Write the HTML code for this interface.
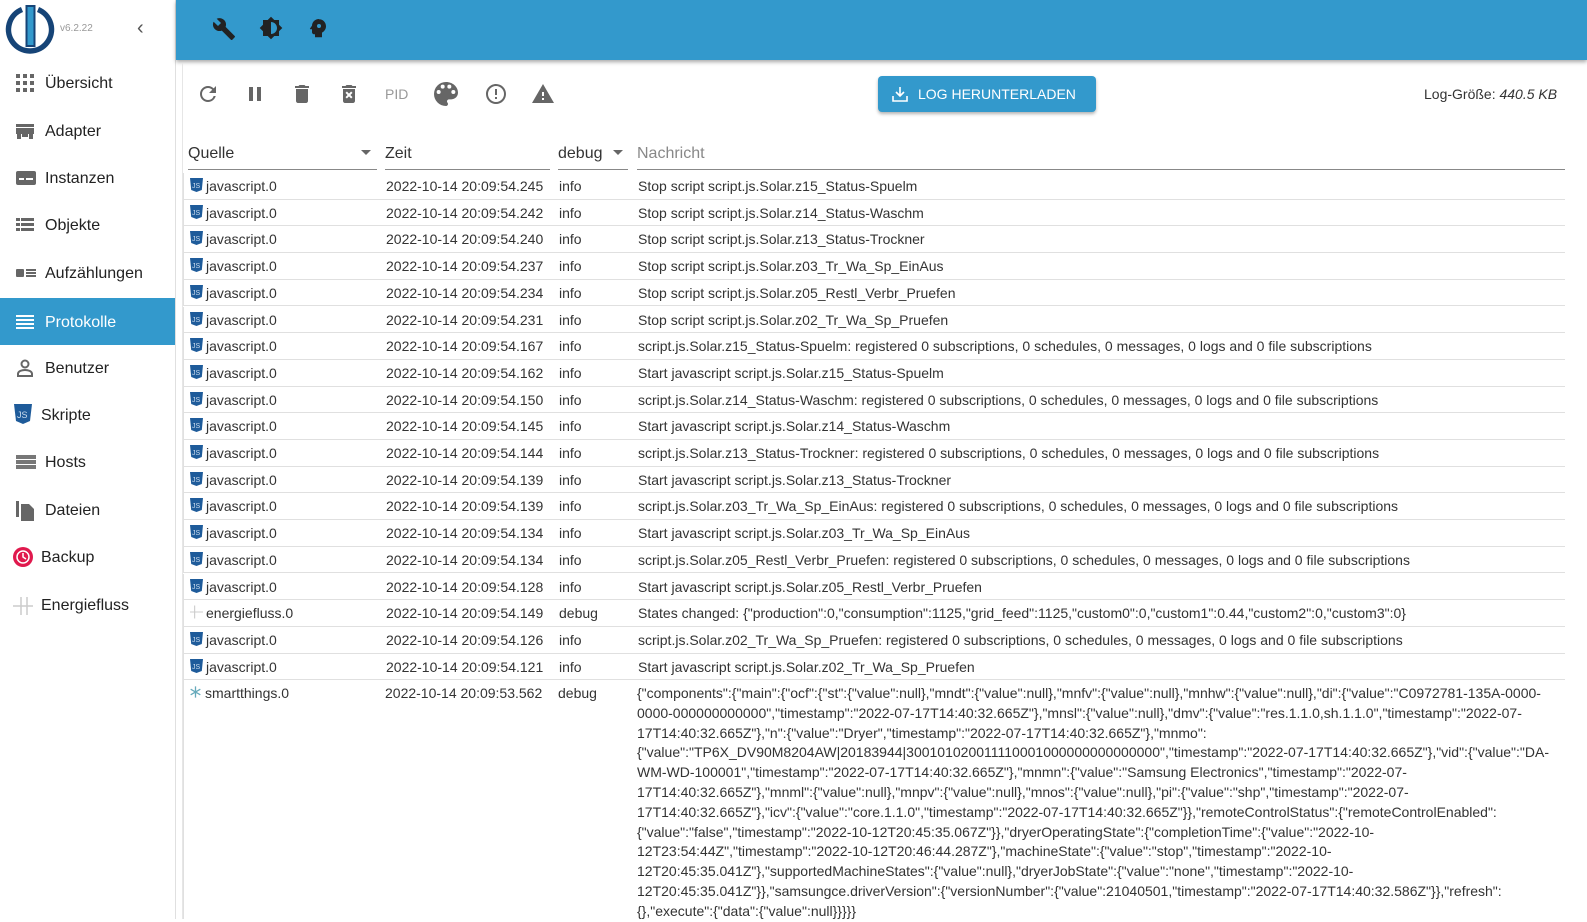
<!DOCTYPE html>
<html><head><meta charset="utf-8"><style>
*{box-sizing:border-box;margin:0;padding:0}
body{width:1587px;height:919px;overflow:hidden;background:#fff;font-family:"Liberation Sans",Arial,sans-serif;position:relative;color:#222}
.side{position:absolute;left:0;top:0;width:176px;height:919px;background:#fff;border-right:1px solid #e0e0e0}
.nav{position:absolute;left:0;width:175px;height:47px;font-size:16px;color:#222}
.nav .t{position:absolute;left:45px;top:16px}
.nav svg{position:absolute;left:16px;top:15px}
.nav.sel{background:#3399cc;color:#fff}
.top{position:absolute;left:176px;top:0;width:1411px;height:60px;background:#3399cc;box-shadow:0 2px 4px rgba(0,0,0,.35)}
.main{position:absolute;left:182px;top:63px;width:1405px;height:856px;border-left:1px solid #e6e6e6}
.tb svg{position:absolute}
.hdr{position:absolute;top:142px;font-size:16px;color:#333;height:28px;border-bottom:1px solid #888}
.row{position:absolute;left:183px;width:1382px;height:26.7px;border-bottom:1px solid #e0e0e0;font-size:14px;color:#333}
.row span{position:absolute;top:5px;white-space:nowrap}
.c1{left:22px}.c2{left:202px}.c3{left:375px}.c4{left:454px}
.ic{position:absolute;left:6px;top:5px;width:13px;height:14px}
.msg{position:absolute;left:637px;top:684px;width:922px;font-size:14px;line-height:19.8px;color:#333;overflow-wrap:anywhere}
</style></head><body>
<div class="side">
<svg style="position:absolute;left:5px;top:3px" width="52" height="52" viewBox="0 0 52 52"><path d="M17 6.5A21.5 21.5 0 1 0 33 6.5" fill="none" stroke="#164477" stroke-width="5.5"/><rect x="21.5" y="3" width="8" height="40" fill="#3399cc" stroke="#164477" stroke-width="2"/></svg>
<div style="position:absolute;left:60px;top:23px;font-size:10px;color:#999">v6.2.22</div>
<div style="position:absolute;left:137px;top:17px;font-size:20px;color:#555">‹</div>
<div class="nav" style="top:59px"><svg width="18" height="18" viewBox="0 0 18 18" fill="#666"><rect x="0" y="0" width="4" height="4"/><rect x="7" y="0" width="4" height="4"/><rect x="14" y="0" width="4" height="4"/><rect x="0" y="7" width="4" height="4"/><rect x="7" y="7" width="4" height="4"/><rect x="14" y="7" width="4" height="4"/><rect x="0" y="14" width="4" height="4"/><rect x="7" y="14" width="4" height="4"/><rect x="14" y="14" width="4" height="4"/></svg><span class="t">Übersicht</span></div>
<div class="nav" style="top:107px"><svg width="18" height="18" viewBox="0 0 18 18" fill="#666"><rect x="0" y="2" width="18" height="3"/><rect x="0" y="6" width="18" height="6"/><rect x="1" y="12" width="4" height="5"/><rect x="13" y="12" width="4" height="5"/><rect x="6" y="12" width="6" height="3"/></svg><span class="t">Adapter</span></div>
<div class="nav" style="top:154px"><svg width="20" height="18" viewBox="0 0 20 18" fill="#666"><rect x="0" y="2" width="20" height="14" rx="2"/><rect x="3" y="9" width="5" height="2" fill="#fff"/><rect x="10" y="9" width="7" height="2" fill="#fff"/></svg><span class="t">Instanzen</span></div>
<div class="nav" style="top:201px"><svg width="18" height="18" viewBox="0 0 18 18" fill="#666"><rect x="0" y="2" width="4" height="3"/><rect x="5" y="2" width="13" height="3"/><rect x="0" y="7" width="4" height="3"/><rect x="5" y="7" width="13" height="3"/><rect x="0" y="12" width="4" height="3"/><rect x="5" y="12" width="13" height="3"/></svg><span class="t">Objekte</span></div>
<div class="nav" style="top:249px"><svg width="20" height="18" viewBox="0 0 20 18" fill="#666"><rect x="0" y="5" width="8" height="8" rx="1"/><rect x="10" y="5" width="10" height="2"/><rect x="10" y="8" width="10" height="2"/><rect x="10" y="11" width="10" height="2"/></svg><span class="t">Aufzählungen</span></div>
<div class="nav sel" style="top:298px"><svg width="18" height="18" viewBox="0 0 18 18" fill="#fff"><rect x="0" y="2" width="18" height="2"/><rect x="0" y="6" width="18" height="2"/><rect x="0" y="10" width="18" height="2"/><rect x="0" y="14" width="18" height="2"/></svg><span class="t">Protokolle</span></div>
<div class="nav" style="top:344px"><svg width="18" height="18" viewBox="0 0 18 18" fill="none" stroke="#666" stroke-width="2"><circle cx="9" cy="5" r="3.5"/><path d="M2 17v-2c0-3 4-4 7-4s7 1 7 4v2z"/></svg><span class="t">Benutzer</span></div>
<div class="nav" style="top:391px"><svg width="18" height="20" viewBox="0 0 18 20" style="left:14px;top:13px"><path d="M0 0h18l-2 17-7 3-7-3z" fill="#1e5b9a"/><text x="3" y="14" font-size="9" fill="#cde" font-family="Liberation Sans">JS</text></svg><span class="t" style="left:41px">Skripte</span></div>
<div class="nav" style="top:438px"><svg width="20" height="18" viewBox="0 0 20 18" fill="#777"><rect x="0" y="2" width="20" height="4"/><rect x="0" y="7" width="20" height="4"/><rect x="0" y="12" width="20" height="4"/></svg><span class="t">Hosts</span></div>
<div class="nav" style="top:486px"><svg width="20" height="20" viewBox="0 0 20 20" fill="#666"><path d="M0 0h3v16H0z"/><path d="M5 3h8l5 5v12H5z"/></svg><span class="t">Dateien</span></div>
<div class="nav" style="top:533px"><svg width="22" height="22" viewBox="0 0 22 22" style="left:12px;top:13px"><circle cx="11" cy="11" r="10" fill="#e0194d"/><circle cx="11" cy="11" r="6" fill="none" stroke="#fff" stroke-width="1.5"/><path d="M11 7v4l3 2" stroke="#fff" stroke-width="1.5" fill="none"/></svg><span class="t" style="left:41px">Backup</span></div>
<div class="nav" style="top:581px"><svg width="22" height="20" viewBox="0 0 22 20" style="left:12px" stroke="#ccc" stroke-width="1.5"><path d="M1 10h20M9 1v18M15 1v18"/></svg><span class="t" style="left:41px">Energiefluss</span></div>
</div>
<div class="top">
<svg style="position:absolute;left:36px;top:17px" width="24" height="24" viewBox="0 0 24 24" fill="#222"><path d="M22.7 19l-9.1-9.1c.9-2.3.4-5-1.5-6.9-2-2-5-2.4-7.4-1.3L9 6 6 9 1.6 4.7C.4 7.1.9 10.1 2.9 12.1c1.9 1.9 4.6 2.4 6.9 1.5l9.1 9.1c.4.4 1 .4 1.4 0l2.3-2.3c.5-.4.5-1.100.1-1.4z"/></svg>
<svg style="position:absolute;left:83px;top:16px" width="24" height="24" viewBox="0 0 24 24" fill="#222"><path d="M20 8.69V4h-4.69L12 .69 8.69 4H4v4.69L.69 12 4 15.31V20h4.69L12 23.31 15.31 20H20v-4.69L23.31 12 20 8.69zM12 18V6c3.31 0 6 2.690 6 6s-2.69 6-6 6z"/></svg>
<svg style="position:absolute;left:130px;top:16px" width="24" height="24" viewBox="0 0 24 24" fill="#222"><path d="M13 3C9.2 3 6.1 5.9 6 9.6L4 12.5c-.2.3 0 .8.5.8H6v3c0 1.1.9 2 2 2h1v3h7v-4.7c2.4-1.1 4-3.5 4-6.3 0-3.9-3.1-7-7-7zm0 9a2 2 0 110-4 2 2 0 010 4z"/></svg>
</div>
<div class="main"></div>
<div class="tb">
<svg style="left:196px;top:82px" width="24" height="24" viewBox="0 0 24 24" fill="#666"><path d="M17.65 6.35A7.958 7.958 0 0012 4c-4.42 0-7.99 3.58-7.99 8s3.57 8 7.99 8c3.73 0 6.84-2.550 7.73-6h-2.08A5.99 5.99 0 0112 18c-3.310 0-6-2.69-6-6s2.69-6 6-6c1.66 0 3.14.69 4.22 1.78L13 11h7V4l-2.35 2.35z"/></svg>
<svg style="left:243px;top:82px" width="24" height="24" viewBox="0 0 24 24" fill="#666"><path d="M6 19h4V5H6v14zm8-14v14h4V5h-4z"/></svg>
<svg style="left:290px;top:82px" width="24" height="24" viewBox="0 0 24 24" fill="#666"><path d="M6 19c0 1.1.9 2 2 2h8c1.1 0 2-.9 2-2V7H6v12zM19 4h-3.5l-1-1h-5l-1 1H5v2h14V4z"/></svg>
<svg style="left:337px;top:82px" width="24" height="24" viewBox="0 0 24 24" fill="#666"><path d="M6 19c0 1.1.9 2 2 2h8c1.1 0 2-.9 2-2V7H6v12zm2.5-8.1l1.4-1.4L12 11.6l2.1-2.1 1.4 1.4L13.4 13l2.1 2.1-1.4 1.4L12 14.4l-2.1 2.1-1.4-1.4 2.1-2.1-2.1-2.1zM15.5 4l-1-1h-5l-1 1H5v2h14V4z"/></svg>
<div style="position:absolute;left:385px;top:86px;font-size:14px;color:#999">PID</div>
<svg style="left:430px;top:78px" width="32" height="32" viewBox="0 0 24 24" fill="#666"><path d="M12 3a9 9 0 000 18c.83 0 1.5-.67 1.5-1.5 0-.39-.15-.74-.39-1.01-.23-.26-.38-.61-.38-.99 0-.83.67-1.5 1.5-1.5H16c2.76 0 5-2.24 5-5 0-4.42-4.03-8-9-8zm-5.5 9a1.5 1.5 0 110-3 1.5 1.5 0 010 3zm3-4a1.5 1.5 0 110-3 1.5 1.5 0 010 3zm5 0a1.5 1.5 0 110-3 1.5 1.5 0 010 3zm3 4a1.5 1.5 0 110-3 1.5 1.5 0 010 3z"/></svg>
<svg style="left:484px;top:82px" width="24" height="24" viewBox="0 0 24 24" fill="#666"><path d="M11 15h2v2h-2zm0-8h2v6h-2zm1-5C6.47 2 2 6.5 2 12a10 10 0 1010-10zm0 18a8 8 0 110-16 8 8 0 010 16z"/></svg>
<svg style="left:531px;top:82px" width="24" height="24" viewBox="0 0 24 24" fill="#666"><path d="M1 21h22L12 2 1 21zm12-3h-2v-2h2v2zm0-4h-2v-4h2v4z"/></svg>
</div>
<div style="position:absolute;left:878px;top:76px;width:218px;height:36px;background:#3399cc;border-radius:4px;box-shadow:0 2px 3px rgba(0,0,0,.3);color:#fff;font-size:14px">
<svg style="position:absolute;left:13px;top:9px" width="18" height="18" viewBox="0 0 18 18" fill="none" stroke="#fff" stroke-width="1.6"><path d="M9 2v9M5 7l4 4 4-4M2 11v5h14v-5"/></svg>
<span style="position:absolute;left:40px;top:10px">LOG HERUNTERLADEN</span></div>
<div style="position:absolute;left:1424px;top:86px;font-size:14px;color:#333">Log-Größe: <i>440.5 KB</i></div>
<div class="hdr" style="left:188px;width:189px"><span style="position:absolute;top:3px">Quelle</span><span style="position:absolute;right:6px;top:8px;width:0;height:0;border:5px solid transparent;border-top-color:#666"></span></div>
<div class="hdr" style="left:385px;width:165px"><span style="position:absolute;top:3px">Zeit</span></div>
<div class="hdr" style="left:558px;width:70px"><span style="position:absolute;top:3px">debug</span><span style="position:absolute;right:5px;top:8px;width:0;height:0;border:5px solid transparent;border-top-color:#666"></span></div>
<div class="hdr" style="left:637px;width:928px"><span style="position:absolute;top:3px;color:#888">Nachricht</span></div>
<div id="rows"></div>
<div style="position:absolute;left:183px;top:680px;width:1px;height:239px;background:#e0e0e0"></div>
<div class="row" style="top:680px;height:239px;border:none"><svg class="ic" viewBox="0 0 14 14"><g stroke="#6ab" stroke-width="1.4"><path d="M7 1v12M1.8 4l10.4 6M1.8 10l10.4-6"/></g></svg><span class="c1">smartthings.0</span><span class="c2">2022-10-14 20:09:53.562</span><span class="c3">debug</span></div>
<div class="msg">{"components":{"main":{"ocf":{"st":{"value":null},"mndt":{"value":null},"mnfv":{"value":null},"mnhw":{"value":null},"di":{"value":"C0972781-135A-0000-0000-000000000000","timestamp":"2022-07-17T14:40:32.665Z"},"mnsl":{"value":null},"dmv":{"value":"res.1.1.0,sh.1.1.0","timestamp":"2022-07-17T14:40:32.665Z"},"n":{"value":"Dryer","timestamp":"2022-07-17T14:40:32.665Z"},"mnmo":<br>{"value":"TP6X_DV90M8204AW|20183944|300101020011110001000000000000000","timestamp":"2022-07-17T14:40:32.665Z"},"vid":{"value":"DA-WM-WD-100001","timestamp":"2022-07-17T14:40:32.665Z"},"mnmn":{"value":"Samsung Electronics","timestamp":"2022-07-17T14:40:32.665Z"},"mnml":{"value":null},"mnpv":{"value":null},"mnos":{"value":null},"pi":{"value":"shp","timestamp":"2022-07-17T14:40:32.665Z"},"icv":{"value":"core.1.1.0","timestamp":"2022-07-17T14:40:32.665Z"}},"remoteControlStatus":{"remoteControlEnabled":<br>{"value":"false","timestamp":"2022-10-12T20:45:35.067Z"}},"dryerOperatingState":{"completionTime":{"value":"2022-10-12T23:54:44Z","timestamp":"2022-10-12T20:46:44.287Z"},"machineState":{"value":"stop","timestamp":"2022-10-12T20:45:35.041Z"},"supportedMachineStates":{"value":null},"dryerJobState":{"value":"none","timestamp":"2022-10-12T20:45:35.041Z"}},"samsungce.driverVersion":{"versionNumber":{"value":21040501,"timestamp":"2022-07-17T14:40:32.586Z"}},"refresh":{},"execute":{"data":{"value":null}}}}}</div>
<script>
const R=[
["javascript.0","2022-10-14 20:09:54.245","info","Stop script script.js.Solar.z15_Status-Spuelm"],
["javascript.0","2022-10-14 20:09:54.242","info","Stop script script.js.Solar.z14_Status-Waschm"],
["javascript.0","2022-10-14 20:09:54.240","info","Stop script script.js.Solar.z13_Status-Trockner"],
["javascript.0","2022-10-14 20:09:54.237","info","Stop script script.js.Solar.z03_Tr_Wa_Sp_EinAus"],
["javascript.0","2022-10-14 20:09:54.234","info","Stop script script.js.Solar.z05_Restl_Verbr_Pruefen"],
["javascript.0","2022-10-14 20:09:54.231","info","Stop script script.js.Solar.z02_Tr_Wa_Sp_Pruefen"],
["javascript.0","2022-10-14 20:09:54.167","info","script.js.Solar.z15_Status-Spuelm: registered 0 subscriptions, 0 schedules, 0 messages, 0 logs and 0 file subscriptions"],
["javascript.0","2022-10-14 20:09:54.162","info","Start javascript script.js.Solar.z15_Status-Spuelm"],
["javascript.0","2022-10-14 20:09:54.150","info","script.js.Solar.z14_Status-Waschm: registered 0 subscriptions, 0 schedules, 0 messages, 0 logs and 0 file subscriptions"],
["javascript.0","2022-10-14 20:09:54.145","info","Start javascript script.js.Solar.z14_Status-Waschm"],
["javascript.0","2022-10-14 20:09:54.144","info","script.js.Solar.z13_Status-Trockner: registered 0 subscriptions, 0 schedules, 0 messages, 0 logs and 0 file subscriptions"],
["javascript.0","2022-10-14 20:09:54.139","info","Start javascript script.js.Solar.z13_Status-Trockner"],
["javascript.0","2022-10-14 20:09:54.139","info","script.js.Solar.z03_Tr_Wa_Sp_EinAus: registered 0 subscriptions, 0 schedules, 0 messages, 0 logs and 0 file subscriptions"],
["javascript.0","2022-10-14 20:09:54.134","info","Start javascript script.js.Solar.z03_Tr_Wa_Sp_EinAus"],
["javascript.0","2022-10-14 20:09:54.134","info","script.js.Solar.z05_Restl_Verbr_Pruefen: registered 0 subscriptions, 0 schedules, 0 messages, 0 logs and 0 file subscriptions"],
["javascript.0","2022-10-14 20:09:54.128","info","Start javascript script.js.Solar.z05_Restl_Verbr_Pruefen"],
["energiefluss.0","2022-10-14 20:09:54.149","debug",'States changed: {"production":0,"consumption":1125,"grid_feed":1125,"custom0":0,"custom1":0.44,"custom2":0,"custom3":0}'],
["javascript.0","2022-10-14 20:09:54.126","info","script.js.Solar.z02_Tr_Wa_Sp_Pruefen: registered 0 subscriptions, 0 schedules, 0 messages, 0 logs and 0 file subscriptions"],
["javascript.0","2022-10-14 20:09:54.121","info","Start javascript script.js.Solar.z02_Tr_Wa_Sp_Pruefen"]];
const js='<svg class="ic" viewBox="0 0 13 14"><path d="M0 0h13l-1.2 12L6.5 14 1.2 12z" fill="#1e5b9a"/><text x="2" y="10" font-size="7" fill="#cde" font-family="Liberation Sans">JS</text></svg>';
const en='<svg class="ic" viewBox="0 0 14 14"><path d="M0 7h14M5 0v14" stroke="#ccc" stroke-width="1.2"/></svg>';
let h='';R.forEach((r,i)=>{h+=`<div class="row" style="top:${173+i*26.7}px;border-left:1px solid #e0e0e0">${r[0][0]=='e'?en:js}<span class="c1">${r[0]}</span><span class="c2">${r[1]}</span><span class="c3">${r[2]}</span><span class="c4"></span></div>`;});
document.getElementById('rows').innerHTML=h;
document.querySelectorAll('.c4').forEach((e,i)=>e.textContent=R[i][3]);
</script>
</body></html>
